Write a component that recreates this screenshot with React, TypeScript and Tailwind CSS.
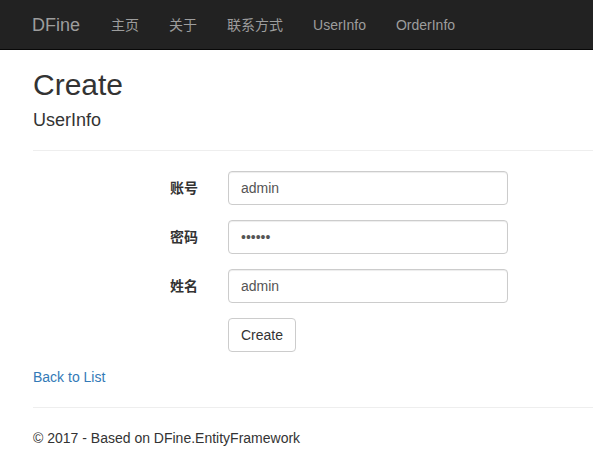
import React from "react";

const font = { fontFamily: '"Liberation Sans", "Noto Sans CJK SC", Arial, sans-serif' };

export default function App() {
  const links = ["主页", "关于", "联系方式", "UserInfo", "OrderInfo"];
  return (
    <div className="min-h-[468px] bg-white text-[14px] leading-[20px] text-[#333] font-['Liberation_Sans','Noto_Sans_CJK_SC',sans-serif]">
      <nav className="h-[50px] bg-[#222] border-b border-[#080808] flex items-center">
        <a className="pl-[32px] pr-[15px] text-[18px] leading-[20px] text-[#9d9d9d]">DFine</a>
        <ul className="flex ml-[1px]">
          {links.map((l) => (
            <li key={l} className="px-[15px] text-[14px] leading-[20px] text-[#9d9d9d]">
              {l}
            </li>
          ))}
        </ul>
      </nav>

      <div className="pl-[33px]">
        <h2 className="mt-[18px] text-[30px] leading-[33px] font-normal text-[#333]">Create</h2>
        <h4 className="mt-[9px] text-[18px] leading-[20px] font-normal text-[#333]">UserInfo</h4>
        <hr className="mt-[20px] border-0 border-t border-[#eee]" />

        <form className="mt-[20px]" onSubmit={(e) => e.preventDefault()}>
          {[
            { label: "账号", value: "admin", type: "text" },
            { label: "密码", value: "123456", type: "password" },
            { label: "姓名", value: "admin", type: "text" },
          ].map((f) => (
            <div key={f.label} className="flex items-center mb-[15px]">
              <label className="w-[165px] text-right font-bold text-[14px] leading-[20px] text-[#333]">
                {f.label}
              </label>
              <input
                readOnly
                type={f.type}
                value={f.value}
                style={font}
                className="ml-[30px] w-[280px] h-[34px] px-[12px] py-[6px] text-[14px] text-[#555] bg-white border border-[#ccc] rounded-[4px] shadow-[inset_0_1px_1px_rgba(0,0,0,0.075)] outline-none"
              />
            </div>
          ))}
          <div className="flex mb-[15px]">
            <div className="w-[165px]" />
            <button
              type="submit"
              style={font}
              className="ml-[30px] h-[34px] px-[12px] py-[6px] text-[14px] leading-[20px] text-[#333] bg-white border border-[#ccc] rounded-[4px]"
            >
              Create
            </button>
          </div>
        </form>

        <div>
          <a className="text-[#337ab7]">Back to List</a>
        </div>

        <hr className="mt-[20px] border-0 border-t border-[#eee]" />
        <footer className="mt-[20px]">
          <p className="text-[#333]">© 2017 - Based on DFine.EntityFramework</p>
        </footer>
      </div>
    </div>
  );
}
